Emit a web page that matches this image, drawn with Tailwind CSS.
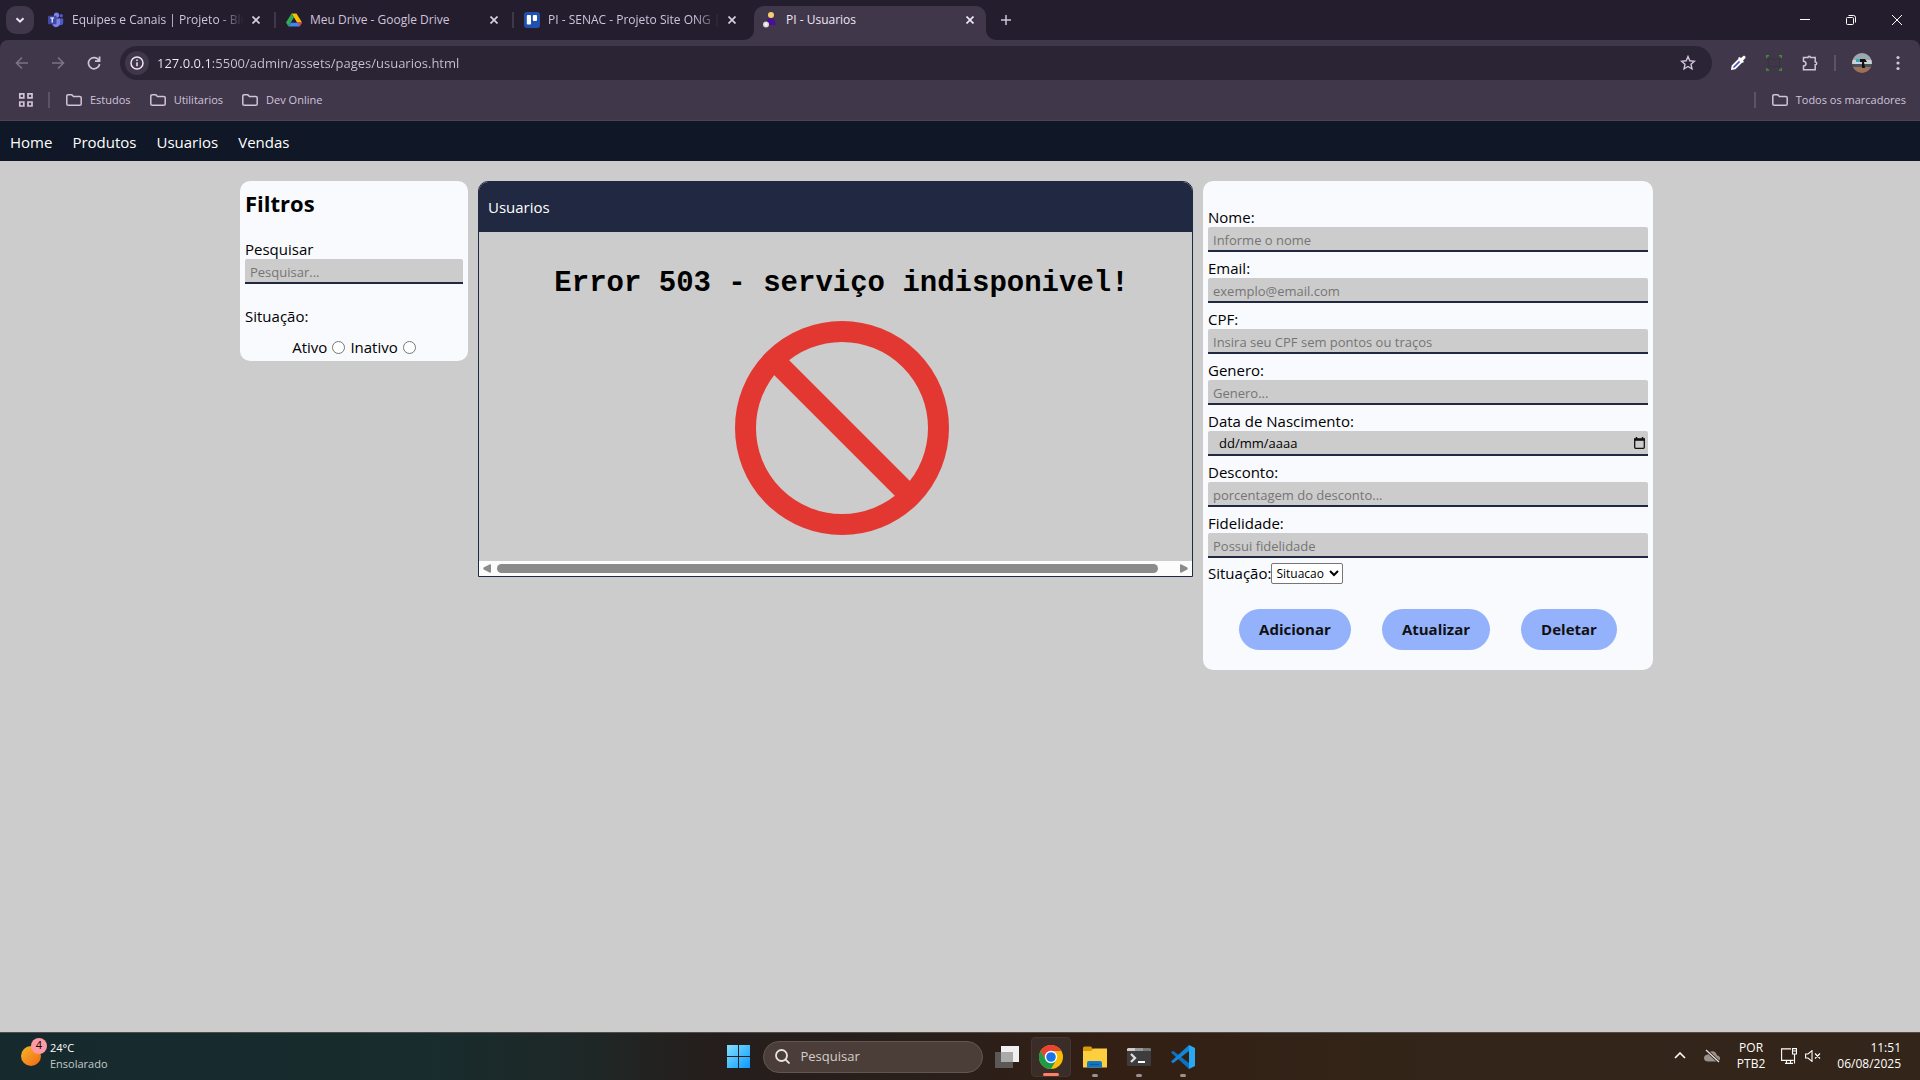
<!DOCTYPE html>
<html lang="pt-BR">
<head>
<meta charset="utf-8">
<title>PI - Usuarios</title>
<script src="https://cdn.jsdelivr.net/npm/@tailwindcss/browser@4"></script>
</head>
<body class="flex min-h-screen flex-col bg-[#cccccc] font-['Open_Sans',sans-serif] text-[15px] text-black">

<!-- Browser tabs -->
<header class="bg-[#231d2d] text-[11px] text-[#d0c4dc]">
  <div class="flex h-10 items-end">
    <div class="flex h-10 flex-1 items-center text-[12px]">
      <button aria-label="Pesquisar guias" class="mr-1 ml-1.5 flex size-7 items-center justify-center rounded-[10px] bg-[#40374b]">
        <svg class="size-3" viewBox="0 0 12 12" fill="none" stroke="#ece4f4" stroke-width="2"><path d="M2.500 4.200 6 7.700l3.500-3.500"/></svg>
      </button>
      <div class="flex w-[238px] items-center pl-2.5">
        <svg class="mr-2 size-4 shrink-0" viewBox="0 0 16 16"><circle cx="8.500" cy="3.200" r="2.600" fill="#7b83eb"/><circle cx="13.200" cy="3.800" r="1.700" fill="#5059c9"/><path d="M11 6.500h4.200v4a2.500 2.500 0 0 1-4.200 2z" fill="#5059c9"/><path d="M4.500 6.500h7.500v5a4 4 0 0 1-7.500 1.500z" fill="#7b83eb"/><rect y="3.800" width="8.500" height="8.500" rx="1" fill="#4048a8"/><path d="M2.200 6h4M4.200 6v4.500" stroke="#fff" stroke-width="1.200"/></svg>
        <span class="flex-1 overflow-hidden whitespace-nowrap [mask-image:linear-gradient(to_right,black_85%,transparent)]">Equipes e Canais | Projeto - Blus</span>
        <button aria-label="Fechar guia" class="mr-2.5 ml-1 flex size-4 items-center justify-center"><svg class="size-2" viewBox="0 0 8 8" stroke="#d8cfe0" stroke-width="1.700"><path d="m.5.5 7 7m0-7-7 7"/></svg></button>
        <span class="h-4 w-0.5 bg-[#40374b]"></span>
      </div>
      <div class="flex w-[238px] items-center pl-2.5">
        <svg class="mr-2 size-4 shrink-0" viewBox="0 0 16 16"><path d="M5.500 1.500h5L16 10.500h-5z" fill="#fbbc04"/><path d="M5.500 1.500 0 10.500l2.400 4 5.600-9z" fill="#34a853"/><path d="M5 10.500h11l-2.500 4h-11z" fill="#4285f4"/><path d="M11 10.500h5l-2.200 3.800z" fill="#ea4335"/><path d="m8 6 2.700 4.500H5.300z" fill="#231d2d"/></svg>
        <span class="flex-1 overflow-hidden whitespace-nowrap">Meu Drive - Google Drive</span>
        <button aria-label="Fechar guia" class="mr-2.5 ml-1 flex size-4 items-center justify-center"><svg class="size-2" viewBox="0 0 8 8" stroke="#d8cfe0" stroke-width="1.700"><path d="m.5.5 7 7m0-7-7 7"/></svg></button>
        <span class="h-4 w-0.5 bg-[#40374b]"></span>
      </div>
      <div class="flex w-[240px] items-center pr-1 pl-2.5">
        <svg class="mr-2 size-4 shrink-0" viewBox="0 0 16 16"><rect width="16" height="16" rx="3" fill="#2050b0"/><rect x="2.800" y="3" width="4.200" height="9.500" rx="1" fill="#fff"/><rect x="8.800" y="3" width="4.200" height="6" rx="1" fill="#fff"/></svg>
        <span class="flex-1 overflow-hidden whitespace-nowrap [mask-image:linear-gradient(to_right,black_85%,transparent)]">PI - SENAC - Projeto Site ONG |</span>
        <button aria-label="Fechar guia" class="mr-2.5 ml-1 flex size-4 items-center justify-center"><svg class="size-2" viewBox="0 0 8 8" stroke="#d8cfe0" stroke-width="1.700"><path d="m.5.5 7 7m0-7-7 7"/></svg></button>
      </div>
      <div class="relative mt-1.5 flex h-[34px] w-[232px] items-center rounded-t-[10px] bg-[#40374b] pr-2 pb-1.5 pl-2 text-[#eee6f4]">
        <svg class="absolute bottom-0 -left-2.5 size-2.5" viewBox="0 0 10 10"><path d="M10 0v10H0A10 10 0 0 0 10 0" fill="#40374b"/></svg>
        <svg class="absolute -right-2.5 bottom-0 size-2.5" viewBox="0 0 10 10"><path d="M0 0v10h10A10 10 0 0 1 0 0" fill="#40374b"/></svg>
        <svg class="mr-2 size-4 shrink-0" viewBox="0 0 16 16"><circle cx="9" cy="3" r="3" fill="#f8cf70"/><path d="M5 13V9q0-2.500 3-2.500h2q3.500 0 3.500 6.500z" fill="#4a0d9c"/><circle cx="4" cy="12.500" r="3" fill="#d8d8d8"/><circle cx="4" cy="12.500" r="1.300" fill="#fff"/></svg>
        <span class="flex-1">PI - Usuarios</span>
        <button aria-label="Fechar guia" class="flex size-4 items-center justify-center"><svg class="size-2" viewBox="0 0 8 8" stroke="#eee6f4" stroke-width="1.700"><path d="m.5.5 7 7m0-7-7 7"/></svg></button>
      </div>
      <button aria-label="Nova guia" class="ml-3 flex size-4 items-center justify-center"><svg class="size-2.5" viewBox="0 0 10 10" stroke="#d0c4dc" stroke-width="1.500"><path d="M5 0v10M0 5h10"/></svg></button>
    </div>
    <div class="flex h-10 items-center">
      <button aria-label="Minimizar" class="flex h-10 w-[46px] items-center justify-center"><svg class="size-2.5" viewBox="0 0 10 10" stroke="#fff"><path d="M0 4.500h10"/></svg></button>
      <button aria-label="Restaurar" class="flex h-10 w-[46px] items-center justify-center"><svg class="size-2.5" viewBox="0 0 10 10" fill="none" stroke="#fff"><rect x=".5" y="2.500" width="7" height="7" rx="1"/><path d="M2.500.5h5a2 2 0 0 1 2 2v5"/></svg></button>
      <button aria-label="Fechar" class="flex h-10 w-[46px] items-center justify-center"><svg class="size-2.5" viewBox="0 0 10 10" stroke="#fff"><path d="m0 0 10 10m0-10L0 10"/></svg></button>
    </div>
  </div>

  <!-- Address bar and bookmarks -->
  <div class="rounded-t-lg border-b border-[#4b434f] bg-[#40374b]">
    <div class="flex h-[46px] items-center pr-1.5">
      <button aria-label="Voltar" class="ml-3 flex size-5 items-center justify-center"><svg class="size-3.5" viewBox="0 0 14 14" fill="none" stroke="#7d7388" stroke-width="1.600"><path d="M13 7H1.500M7 1.500 1.500 7 7 12.500"/></svg></button>
      <button aria-label="Avançar" class="ml-4 flex size-5 items-center justify-center"><svg class="size-3.5" viewBox="0 0 14 14" fill="none" stroke="#7d7388" stroke-width="1.600"><path d="M1 7h11.500M7 1.500 12.500 7 7 12.500"/></svg></button>
      <button aria-label="Recarregar" class="ml-4 flex size-5 items-center justify-center"><svg class="size-3.5" viewBox="0 0 14 14" fill="none" stroke="#d0c4dc" stroke-width="1.700"><path d="M12 4.500A5.600 5.600 0 1 0 12.600 8M12.600.5v4.600H8"/></svg></button>
      <div class="mr-4 ml-4 flex h-[34px] flex-1 items-center rounded-full bg-[#2b2434] pr-4 pl-[5px]">
        <button aria-label="Informações do site" class="flex size-6 items-center justify-center rounded-full bg-[#40374b]"><svg class="size-3.5" viewBox="0 0 14 14" fill="none" stroke="#eee6f4" stroke-width="1.500"><circle cx="7" cy="7" r="6"/><path d="M7 6.200v4M7 3.600v1.400"/></svg></button>
        <input aria-label="Endereço" value="127.0.0.1:5500/admin/assets/pages/usuarios.html" class="ml-2 h-5 flex-1 bg-linear-to-r from-[#f4eef8] from-[54px] to-[#cdc5d4] to-[54px] bg-clip-text text-[13px] leading-5 text-transparent outline-none">
        <button aria-label="Favoritar"><svg class="size-4" viewBox="0 0 16 16" fill="none" stroke="#d0c4dc" stroke-width="1.400"><path d="m8 1.500 1.800 4.300 4.700.4L11 9.300l1 4.600L8 11.500l-4 2.400 1-4.600L1.500 6.200l4.700-.4z"/></svg></button>
      </div>
      <div class="flex items-center">
        <button aria-label="Conta-gotas" class="mx-0.5"><svg class="size-4" viewBox="0 0 16 16"><path d="m2 14 .5-3L9 4.500 11.500 7 5 13.500z" fill="#4050c0" stroke="#fff" stroke-width="1.800"/><path d="m8 3 5 5 .8-1.500-.8-1 2.500-2.500q.5-2-1.500-2.500L11 3 9.500 2z" fill="#fff"/></svg></button>
        <button aria-label="Captura de tela" class="ml-[18px]"><svg class="size-4" viewBox="0 0 16 16" fill="none"><rect x="2.500" y="4" width="11" height="7.500" stroke="#37373b" stroke-width="1.500"/><path d="M.7 3V.7H3M13 .7h2.300V3M.7 13v2.300H3M13 15.300h2.300V13" stroke="#3f8a35" stroke-width="1.500"/></svg></button>
        <button aria-label="Extensões" class="ml-5"><svg class="size-4" viewBox="0 0 16 16" fill="none" stroke="#d0c4dc" stroke-width="1.500"><path d="M1.500 2.500H6q0-1.300 1.200-1.300T8.400 2.500h4.800V7q1.500 0 1.500 1.400T13.200 9.800v5H1.500V11Q4 10.600 4 8.700T1.500 6.300z"/></svg></button>
        <span class="mx-4 h-4 w-0.5 bg-[#5c5366]"></span>
        <button aria-label="Perfil"><svg class="size-5" viewBox="0 0 20 20"><defs><clipPath id="av"><circle cx="10" cy="10" r="10"/></clipPath></defs><g clip-path="url(#av)"><path fill="#9da8ad" d="M0 0h20v9H0z"/><path fill="#c9d2d4" d="M0 7h20v4H0z"/><path fill="#48525a" d="M0 11h20v3H0z"/><path fill="#a06f58" d="M0 14h20v6H0z"/><path fill="#37a6c8" d="M4 6h5v3H4z"/><path fill="#111" d="M8 6h5l2 3h-3l1 6h-3V9H8z"/></g></svg></button>
        <button aria-label="Menu" class="mr-2 ml-[18px]"><svg class="size-4" viewBox="0 0 16 16" fill="#d0c4dc"><circle cx="8" cy="2.500" r="1.600"/><circle cx="8" cy="8" r="1.600"/><circle cx="8" cy="13.500" r="1.600"/></svg></button>
      </div>
    </div>
    <div class="flex h-[34px] items-center pr-3.5 pb-[6px] pl-[18px]">
      <button aria-label="Aplicativos"><svg class="size-4" viewBox="0 0 16 16" fill="none" stroke="#d0c4dc" stroke-width="1.700"><path d="M1.800 1.800h4v4h-4zM10 1.800h4v4h-4zM1.800 10h4v4h-4zM10 10h4v4h-4z"/></svg></button>
      <span class="mr-4 ml-3.5 h-4 w-0.5 bg-[#5c5366]"></span>
      <div class="flex gap-[19px]">
        <a href="#" class="flex items-center gap-2"><svg class="h-3 w-4" viewBox="0 0 16 12" fill="none" stroke="#d0c4dc" stroke-width="1.500"><path d="M.8 2.200q0-1.400 1.400-1.400h3.600l1.600 1.700h6.400q1.400 0 1.400 1.300v6.100q0 1.300-1.400 1.300H2.200Q.8 11.200.8 9.900z"/></svg>Estudos</a>
        <a href="#" class="flex items-center gap-2"><svg class="h-3 w-4" viewBox="0 0 16 12" fill="none" stroke="#d0c4dc" stroke-width="1.500"><path d="M.8 2.200q0-1.400 1.400-1.400h3.600l1.600 1.700h6.400q1.400 0 1.400 1.300v6.100q0 1.300-1.400 1.300H2.200Q.8 11.200.8 9.900z"/></svg>Utilitarios</a>
        <a href="#" class="flex items-center gap-2"><svg class="h-3 w-4" viewBox="0 0 16 12" fill="none" stroke="#d0c4dc" stroke-width="1.500"><path d="M.8 2.200q0-1.400 1.400-1.400h3.600l1.600 1.700h6.400q1.400 0 1.400 1.300v6.100q0 1.300-1.400 1.300H2.200Q.8 11.200.8 9.900z"/></svg>Dev Online</a>
      </div>
      <span class="mr-4 ml-auto h-4 w-0.5 bg-[#5c5366]"></span>
      <a href="#" class="flex items-center gap-2"><svg class="h-3 w-4" viewBox="0 0 16 12" fill="none" stroke="#d0c4dc" stroke-width="1.500"><path d="M.8 2.200q0-1.400 1.400-1.400h3.600l1.600 1.700h6.400q1.400 0 1.400 1.300v6.100q0 1.300-1.400 1.300H2.200Q.8 11.200.8 9.900z"/></svg>Todos os marcadores</a>
    </div>
  </div>
</header>

<!-- Site navigation -->
<nav class="flex h-10 items-center gap-5 bg-[#101726] px-2.5 pt-0.5 text-white">
  <a href="#">Home</a><a href="#">Produtos</a><a href="#">Usuarios</a><a href="#">Vendas</a>
</nav>

<main class="grid flex-1 grid-cols-[228fr_715fr_450fr] items-start gap-2.5 pt-5 pr-[267px] pl-[12.5%]">
  <section class="rounded-[10px] bg-[#f9fafe] px-[5px] pt-1.5 pb-0.5">
    <h2 class="text-[22px] leading-8 font-bold">Filtros</h2>
    <label for="busca" class="mt-5 block leading-5">Pesquisar</label>
    <input id="busca" placeholder="Pesquisar..." class="block h-[25px] w-full rounded-t-[2px] border-b-2 border-[#212942] bg-[#cccccc] px-[5px] pt-0.5 text-[13px] placeholder:text-[#757575]">
    <fieldset class="mt-5">
      <legend class="leading-6">Situação:</legend>
      <div class="mt-[7px] flex h-6 items-center justify-center gap-[5px]">
        <label for="ativo">Ativo</label><input id="ativo" type="radio" name="filtro" class="size-[13px]">
        <label for="inativo">Inativo</label><input id="inativo" type="radio" name="filtro" class="size-[13px]">
      </div>
    </fieldset>
  </section>

  <section class="overflow-hidden rounded-t-[10px] border border-[#212942]">
    <h2 class="flex h-[50px] items-center bg-[#212942] px-[9px] text-white">Usuarios</h2>
    <div class="flex flex-col items-center pt-9 pb-[26px] pl-3">
      <h1 class="font-['Liberation_Mono',monospace] text-[29px] leading-8 font-bold whitespace-nowrap">Error 503 - serviço indisponivel!</h1>
      <svg class="mt-[21px] size-[214px]" viewBox="0 0 214 214" fill="none" stroke="#e33831" stroke-width="21"><circle cx="107" cy="107" r="96.500"/><path d="m39 39 136 136"/></svg>
    </div>
    <div class="flex h-[15px] items-center gap-1.5 bg-[#fcfcfc] px-1">
      <svg class="h-[9px] w-2" viewBox="0 0 8 9" fill="#8b8b8b"><path d="M8 1v7q0 1-1 .8L.6 5.400Q0 4.500.6 3.600L7 .2q1-.2 1 .8"/></svg>
      <div class="flex-1 pr-4"><div class="h-[9px] rounded-full bg-[#8b8b8b]"></div></div>
      <svg class="h-[9px] w-2" viewBox="0 0 8 9" fill="#8b8b8b"><path d="M0 1v7q0 1 1 .8l6.400-3.400q.6-.9 0-1.800L1 .2Q0 0 0 1"/></svg>
    </div>
  </section>

  <form class="rounded-[10px] bg-[#f9fafe] px-[5px] pt-5 pb-5">
    <label for="nome" class="mt-1.5 block leading-5">Nome:</label>
    <input id="nome" placeholder="Informe o nome" class="block h-[25px] w-full rounded-t-[2px] border-b-2 border-[#212942] bg-[#cccccc] px-[5px] pt-0.5 text-[13px] placeholder:text-[#757575]">
    <label for="email" class="mt-1.5 block leading-5">Email:</label>
    <input id="email" type="email" placeholder="exemplo@email.com" class="block h-[25px] w-full rounded-t-[2px] border-b-2 border-[#212942] bg-[#cccccc] px-[5px] pt-0.5 text-[13px] placeholder:text-[#757575]">
    <label for="cpf" class="mt-1.5 block leading-5">CPF:</label>
    <input id="cpf" placeholder="Insira seu CPF sem pontos ou traços" class="block h-[25px] w-full rounded-t-[2px] border-b-2 border-[#212942] bg-[#cccccc] px-[5px] pt-0.5 text-[13px] placeholder:text-[#757575]">
    <label for="genero" class="mt-1.5 block leading-5">Genero:</label>
    <input id="genero" placeholder="Genero..." class="block h-[25px] w-full rounded-t-[2px] border-b-2 border-[#212942] bg-[#cccccc] px-[5px] pt-0.5 text-[13px] placeholder:text-[#757575]">
    <label for="nascimento" class="mt-1.5 block leading-5">Data de Nascimento:</label>
    <div class="flex h-[25px] items-center rounded-t-[2px] border-b-2 border-[#212942] bg-[#cccccc] pr-[3px]">
      <input id="nascimento" placeholder="dd/mm/aaaa" class="min-w-0 flex-1 pt-0.5 pl-[11px] text-[13px] placeholder:text-black">
      <button type="button" aria-label="Abrir calendário"><svg class="h-3 w-[11px]" viewBox="0 0 11 12" fill="none" stroke="#111"><path d="M.7 2.500v7.800q0 1 1 1h7.600q1 0 1-1V2.500" stroke-width="1.300"/><path d="M0 2.500h11" stroke-width="2.600"/><path d="M2.500 0v2M8.500 0v2" stroke-width="1.500"/></svg></button>
    </div>
    <label for="desconto" class="mt-1.5 block leading-5">Desconto:</label>
    <input id="desconto" placeholder="porcentagem do desconto..." class="block h-[25px] w-full rounded-t-[2px] border-b-2 border-[#212942] bg-[#cccccc] px-[5px] pt-0.5 text-[13px] placeholder:text-[#757575]">
    <label for="fidelidade" class="mt-1.5 block leading-5">Fidelidade:</label>
    <input id="fidelidade" placeholder="Possui fidelidade" class="block h-[25px] w-full rounded-t-[2px] border-b-2 border-[#212942] bg-[#cccccc] px-[5px] pt-0.5 text-[13px] placeholder:text-[#757575]">
    <div class="mt-[5px] flex h-[21px] items-center">
      <label for="situacao">Situação:</label>
      <select id="situacao" class="h-[21px] w-[72px] rounded-[2px] border border-[#767676] bg-white text-[12px]"><option>Situacao</option></select>
    </div>
    <div class="mt-[25px] flex justify-evenly font-bold text-[#101010]">
      <button type="button" class="h-[41px] rounded-full bg-[#94b2fc] px-5">Adicionar</button>
      <button type="button" class="h-[41px] rounded-full bg-[#94b2fc] px-5">Atualizar</button>
      <button type="button" class="h-[41px] rounded-full bg-[#94b2fc] px-5">Deletar</button>
    </div>
  </form>
</main>

<!-- Taskbar -->
<footer class="grid h-12 grid-cols-[1fr_auto_1fr] items-center border-t border-[#4f4c4a] bg-[linear-gradient(to_right,#162a2d,#182c2e_22%,#1f2726_31%,#251e1c_37%,#291f1b_48%,#331f14_58%,#332519_75%)] text-[12px] text-white">
  <button class="flex items-center justify-self-start pb-0.5 pl-[21px] text-left text-[11px]">
    <span class="relative mr-[9px] size-5 rounded-full bg-linear-to-br from-[#f3b62c] to-[#f0650f]"><span class="absolute -top-2 left-[10px] flex size-4 items-center justify-center rounded-full bg-[#ff99a4] text-black">4</span></span>
    <span class="leading-4">24°C<br><span class="text-[#c4caca]">Ensolarado</span></span>
  </button>
  <div class="flex items-center">
    <button aria-label="Iniciar" class="mr-[13px]"><svg class="size-[23px]" viewBox="0 0 23 23"><defs><linearGradient id="win" x2="1" y2="1"><stop stop-color="#84e0ff"/><stop offset="1" stop-color="#0a9bff"/></linearGradient></defs><path fill="url(#win)" d="M0 0h11v11H0zM12 0h11v11H12zM0 12h11v11H0zM12 12h11v11H12z"/></svg></button>
    <label class="flex h-8 w-[220px] items-center rounded-full border border-[#64564f] bg-[#4b3e39] pl-[11px]">
      <svg class="mr-[11px] size-[15px] shrink-0" viewBox="0 0 15 15" fill="none" stroke="#e8e4e2" stroke-width="1.800"><circle cx="6.500" cy="6.500" r="5.500"/><path d="m10.500 10.500 4 4"/></svg>
      <input aria-label="Pesquisar" placeholder="Pesquisar" class="w-full text-[13px] outline-none placeholder:text-[#d4cecb]">
    </label>
    <div class="ml-1 flex items-center gap-1">
      <button aria-label="Visão de tarefas" class="flex size-10 items-center justify-center"><svg class="size-6" viewBox="0 0 24 24"><path d="M6 1h18v16H6z" fill="#f0f0f0"/><path d="M0 7h18v16H0z" fill="#5c5856"/><path d="M6 7h12v10H6z" fill="#aaa"/></svg></button>
      <button aria-label="Google Chrome" class="relative flex size-10 items-center justify-center rounded-[4px] border border-[#45362f] bg-[#3a2d27]"><svg class="size-6" viewBox="0 0 24 24"><circle cx="12" cy="12" r="12" fill="#fbbc04"/><path d="M1.600 6A12 12 0 0 1 22.400 6H12l-5.200 9z" fill="#ea4335"/><path d="M1.600 6A12 12 0 0 0 12 24l5.200-9H6.800z" fill="#1e9b48"/><circle cx="12" cy="12" r="6.200" fill="#fff"/><circle cx="12" cy="12" r="4.800" fill="#1a73e8"/></svg><span class="absolute bottom-0 h-[3px] w-4 rounded-full bg-[#ff8066]"></span></button>
      <button aria-label="Explorador de arquivos" class="relative flex size-10 items-center justify-center"><svg class="size-6" viewBox="0 0 24 24"><path d="M0 3q0-1.500 1.500-1.500H8L10 4v4H0z" fill="#d99a0b"/><path d="M0 6h8l2.500-2.500H24v19H0z" fill="#fdcf3f"/><path d="M4 22.500V18q0-2 2-2h11q2 0 2 2v4.500z" fill="#1178c8"/><path d="M7 19.500h9" stroke="#0a5ba5" stroke-width="1.500"/></svg><span class="absolute bottom-0 h-[3px] w-1.5 rounded-full bg-[#9a9290]"></span></button>
      <button aria-label="Terminal" class="relative flex size-10 items-center justify-center"><svg class="size-6" viewBox="0 0 24 24" fill="none"><rect y="3" width="24" height="18" rx="1.500" fill="#3d3d3d"/><path d="M1 3h7v3H0V4z" fill="#ccc"/><path d="M8 3h8v3H8z" fill="#999"/><path d="M16 3h7l1 1v2h-8z" fill="#777"/><path d="m4 9 4 4-4 4" stroke="#ddd" stroke-width="2.300"/><path d="M11 17h7" stroke="#fff" stroke-width="2"/></svg><span class="absolute bottom-0 h-[3px] w-1.5 rounded-full bg-[#9a9290]"></span></button>
      <button aria-label="Visual Studio Code" class="relative mr-[-9px] flex size-10 items-center justify-center"><svg class="size-6" viewBox="0 0 24 24"><path d="m0 7.500 2-1.800L18 18v6z" fill="#0a72c0"/><path d="M0 16.500 18 0v6L2 18.300z" fill="#1486d6"/><path d="M18 0 24 3v18l-6 3z" fill="#2aa7f3"/></svg><span class="absolute bottom-0 h-[3px] w-1.5 rounded-full bg-[#9a9290]"></span></button>
    </div>
  </div>
  <div class="flex items-center justify-self-end pr-[19px] pb-0.5">
    <button aria-label="Mostrar ícones ocultos"><svg class="h-[7px] w-3" viewBox="0 0 12 7" fill="none" stroke="#fff" stroke-width="1.600"><path d="m1 6 5-5 5 5"/></svg></button>
    <svg class="ml-[18px] h-3.5 w-4" viewBox="0 0 16 14"><path d="M3.500 12.500Q0 12 0 9t3.500-3.200Q5 2 8.500 2.200T13 6.500q3 .4 3 3t-3 3z" fill="#9a918b"/><path d="m2 1 13 12" stroke="#33251a" stroke-width="3"/><path d="m2 1 13 12" stroke="#e8e4e2" stroke-width="1.200"/></svg>
    <button class="ml-[17px] text-center leading-4">POR<br>PTB2</button>
    <svg class="ml-4 h-4 w-4" viewBox="0 0 16 16" fill="none" stroke="#fff" stroke-width="1.100"><path d="M10 .9H.6v11.500h12M4 15.400h8M5.500 12.500v3M9.500 12.500v3M11.500.6h4V6h-4zM11.500 3h4M13.500 6v9.500"/></svg>
    <svg class="ml-2 h-3 w-4" viewBox="0 0 16 12" fill="none" stroke="#fff" stroke-width="1.100"><path d="M.6 4H3l4-3.300v10.600L3 8H.6zM10 3.500l5 5m0-5-5 5"/></svg>
    <time class="ml-4 text-right leading-4">11:51<br>06/08/2025</time>
  </div>
</footer>
</body>
</html>
